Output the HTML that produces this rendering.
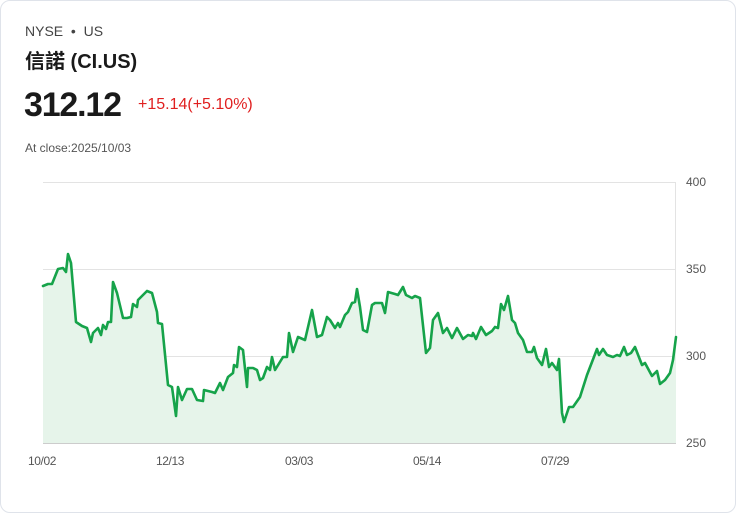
<!DOCTYPE html>
<html><head><meta charset="utf-8"><style>
html,body{margin:0;padding:0;background:#fff;}
body{width:736px;height:513px;position:relative;overflow:hidden;font-family:"Liberation Sans","Noto Sans CJK TC",sans-serif;}
.card{position:absolute;left:0;top:0;width:734px;height:511px;border:1px solid #dfe3ea;border-radius:10px;}
.t{position:absolute;white-space:nowrap;}
</style></head><body>
<div class="card"></div>
<div class="t" style="left:25px;top:23px;font-size:14px;color:#444;">NYSE &nbsp;•&nbsp; US</div>
<div class="t" style="left:25px;top:45px;font-size:20px;font-weight:bold;color:#1a1a1a;">信諾 (CI.US)</div>
<div class="t" style="left:24px;top:86px;font-size:34px;font-weight:bold;color:#1a1a1a;letter-spacing:-1.2px;">312.12</div>
<div class="t" style="left:138px;top:96px;font-size:16px;color:#e02020;">+15.14(+5.10%)</div>
<div class="t" style="left:25px;top:141px;font-size:12px;color:#555;">At close:2025/10/03</div>
<svg width="736" height="513" style="position:absolute;left:0;top:0" xmlns="http://www.w3.org/2000/svg">
<g stroke="#e3e3e3" stroke-width="1">
<line x1="43" y1="182.5" x2="676" y2="182.5"/>
<line x1="43" y1="269.5" x2="676" y2="269.5"/>
<line x1="43" y1="356.5" x2="676" y2="356.5"/>
<line x1="43" y1="443.5" x2="676" y2="443.5" stroke="#ccc"/>
<line x1="675.5" y1="182" x2="675.5" y2="443"/>
</g>
<g font-family="Liberation Sans, sans-serif" font-size="12" fill="#555">
<text x="686" y="186">400</text><text x="686" y="273">350</text><text x="686" y="360">300</text><text x="686" y="447">250</text>
<g letter-spacing="-0.4"><text x="28" y="465">10/02</text><text x="156" y="465">12/13</text><text x="285" y="465">03/03</text><text x="413" y="465">05/14</text><text x="541" y="465">07/29</text></g>
</g>
<path id="p" d="M43,286 L48,284 52,284 58,269 63,268 66,272 68,254 71,263 76,322 82,326 87,328 91,342 93,333 98,328 101,335 103,325 106,329 108,322 111,322 113,282 117,293 123,318 127,318 131,317 133,304 137,307 138,300 147,291 152,293 157,312 158,323 162,324 168,385 172,387 176,416 178,387 182,400 187,389 192,389 197,400 203,401 204,390 212,392 215,393 220,383 223,390 228,377 233,373 234,365 237,367 239,347 243,350 247,387 248,368 253,368 257,370 260,380 263,378 267,367 270,370 272,357 275,370 283,357 287,357 289,333 293,352 298,337 305,340 312,310 317,337 322,335 327,317 330,320 335,328 338,323 340,327 345,315 348,312 352,303 355,302 357,289 360,307 363,330 367,332 372,305 375,303 382,303 385,313 388,292 395,294 398,295 403,287 406,295 412,298 415,296 420,298 426,353 430,348 433,320 438,313 443,333 447,328 452,338 457,328 463,339 468,335 472,336 473,333 476,339 481,327 486,335 492,331 495,327 498,328 501,304 504,310 508,296 512,320 515,323 518,333 523,340 527,352 532,352 534,347 537,358 542,365 546,349 549,367 552,363 557,370 559,359 562,413 564,422 569,407 573,407 580,397 587,375 592,362 597,349 599,355 603,349 607,355 613,357 617,355 620,356 624,347 627,355 631,353 635,347 642,365 645,363 652,376 657,371 660,384 665,380 670,373 673,360 676,337" fill="none"/>
<path d="M43,286 L48,284 52,284 58,269 63,268 66,272 68,254 71,263 76,322 82,326 87,328 91,342 93,333 98,328 101,335 103,325 106,329 108,322 111,322 113,282 117,293 123,318 127,318 131,317 133,304 137,307 138,300 147,291 152,293 157,312 158,323 162,324 168,385 172,387 176,416 178,387 182,400 187,389 192,389 197,400 203,401 204,390 212,392 215,393 220,383 223,390 228,377 233,373 234,365 237,367 239,347 243,350 247,387 248,368 253,368 257,370 260,380 263,378 267,367 270,370 272,357 275,370 283,357 287,357 289,333 293,352 298,337 305,340 312,310 317,337 322,335 327,317 330,320 335,328 338,323 340,327 345,315 348,312 352,303 355,302 357,289 360,307 363,330 367,332 372,305 375,303 382,303 385,313 388,292 395,294 398,295 403,287 406,295 412,298 415,296 420,298 426,353 430,348 433,320 438,313 443,333 447,328 452,338 457,328 463,339 468,335 472,336 473,333 476,339 481,327 486,335 492,331 495,327 498,328 501,304 504,310 508,296 512,320 515,323 518,333 523,340 527,352 532,352 534,347 537,358 542,365 546,349 549,367 552,363 557,370 559,359 562,413 564,422 569,407 573,407 580,397 587,375 592,362 597,349 599,355 603,349 607,355 613,357 617,355 620,356 624,347 627,355 631,353 635,347 642,365 645,363 652,376 657,371 660,384 665,380 670,373 673,360 676,337 L676,443 L43,443 Z" fill="#e6f4ea"/>
<use href="#p" stroke="#16a34a" stroke-width="2.6" stroke-linejoin="round" stroke-linecap="round"/>
</svg>
</body></html>
